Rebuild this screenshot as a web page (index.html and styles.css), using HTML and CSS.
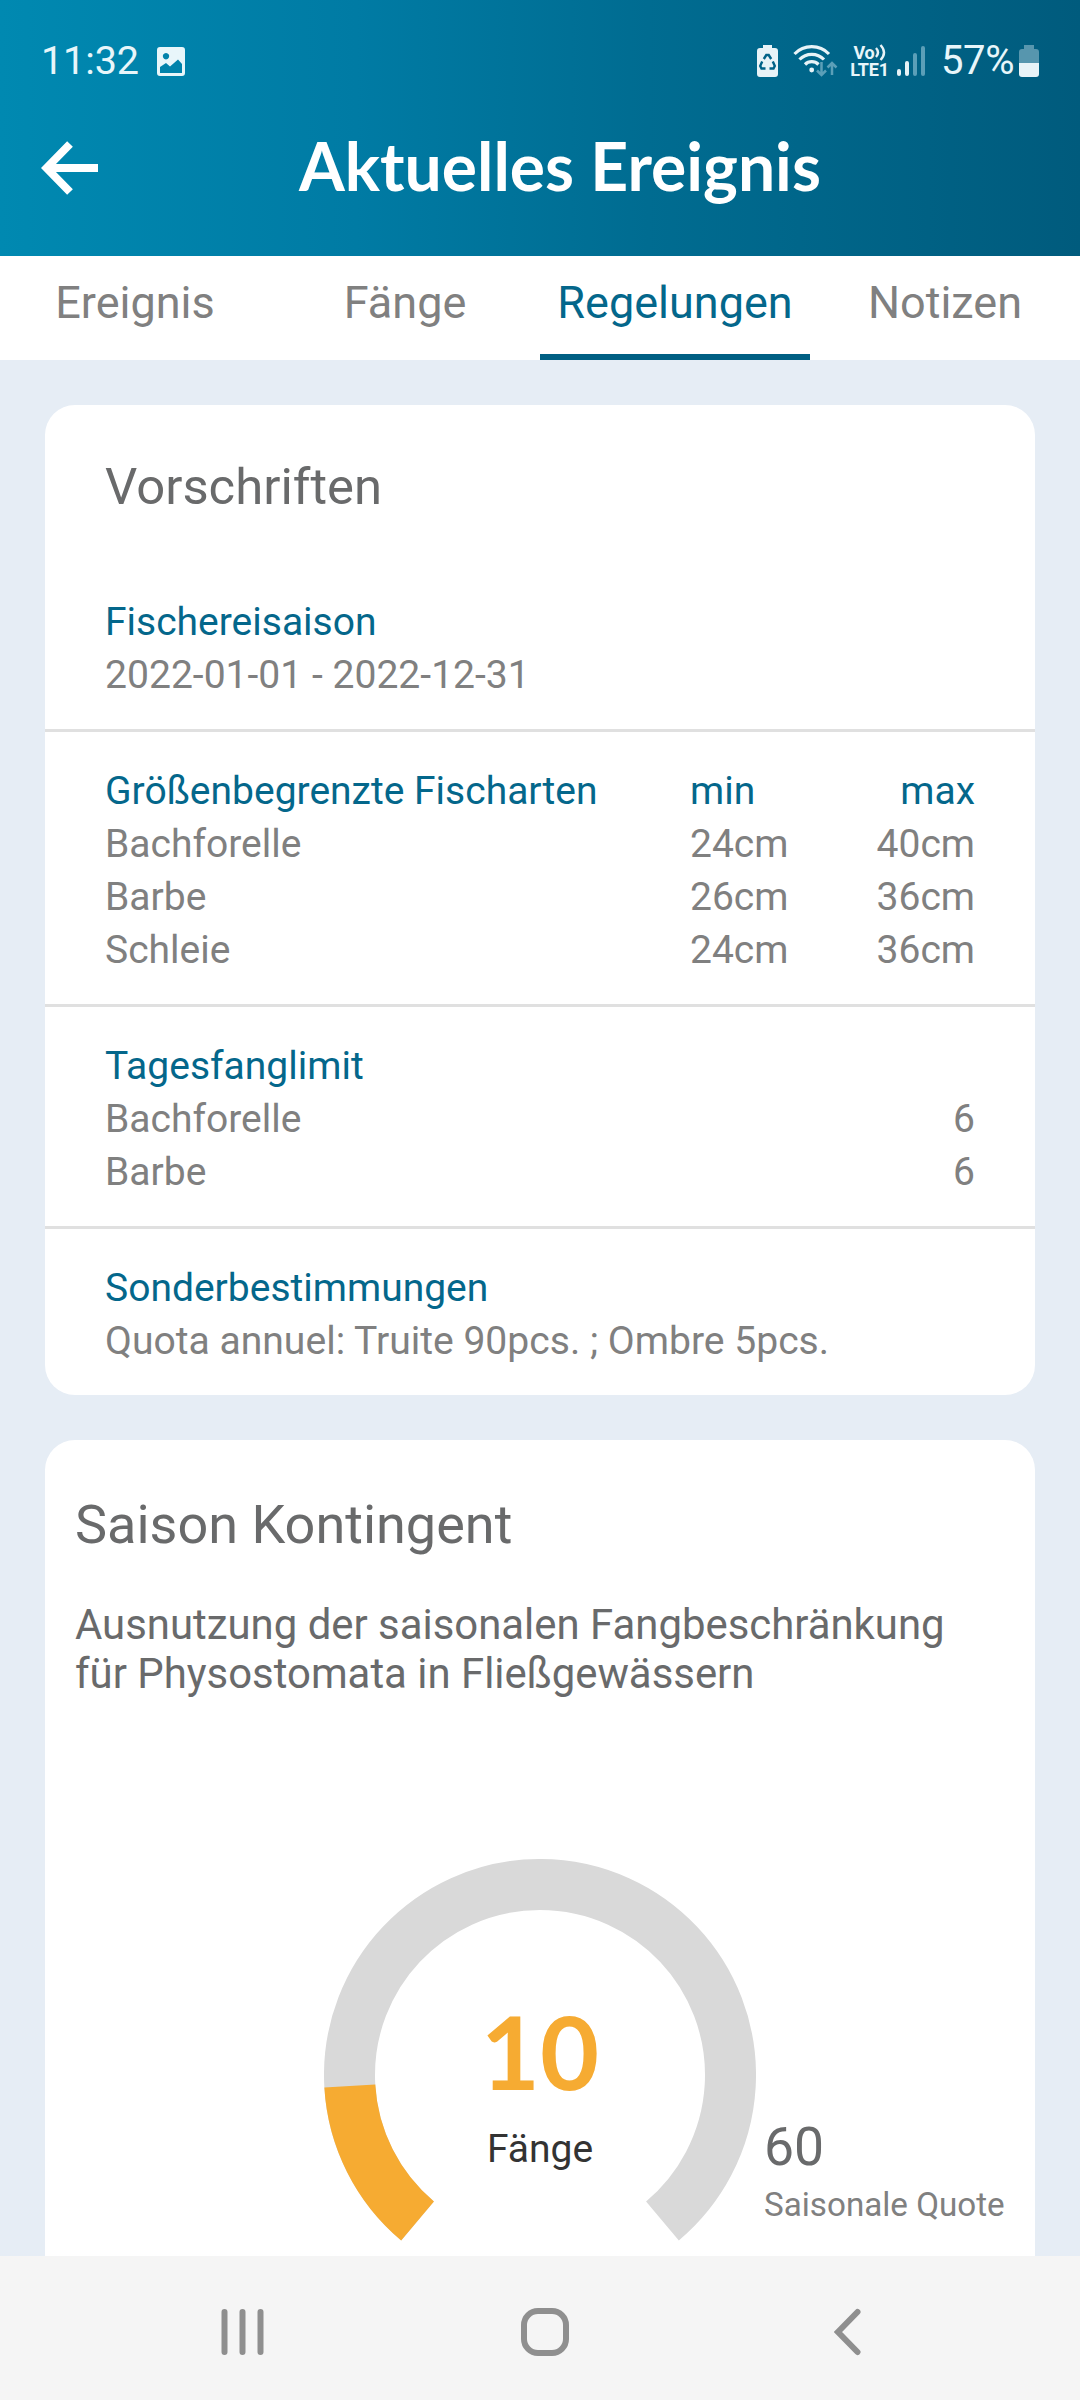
FILE: index.html
```html
<!DOCTYPE html>
<html lang="de">
<head>
    <meta charset="UTF-8">
    <meta name="viewport" content="width=device-width, initial-scale=1.0">
    <title>Aktuelles Ereignis</title>
    <link rel="stylesheet" href="styles.css">
</head>
<body>
    <header>
        <div class="status-bar">
            <span class="clock">11:32</span>
            <svg class="icon-image" width="28" height="29" viewBox="0 0 28 29">
                <path fill="#e8f6fa" fill-rule="evenodd" d="M3 0h22a3 3 0 0 1 3 3v23a3 3 0 0 1-3 3H3a3 3 0 0 1-3-3V3a3 3 0 0 1 3-3zM9 6a3.200 3.200 0 1 0 .01 0zM3 20v6h22v-9l-4-4.500-8 7-4-3.500z"/>
            </svg>

            <div class="status-icons">
                <svg class="icon-saver" width="21" height="32" viewBox="0 0 21 32">
                    <path fill="#e8f3f7" d="M6 0h9v3h3a3 3 0 0 1 3 3v23a3 3 0 0 1-3 3H3a3 3 0 0 1-3-3V6a3 3 0 0 1 3-3h3z"/>
                    <path fill="none" stroke="#006287" stroke-width="2.400" d="M6.800 14L9.300 10h2.400l2.500 4M15.800 16.500l2 4.500-1.300 2.500H12.500M8.500 23.500H4.500L3.200 21l2-4.500"/>
                </svg>
                <svg class="icon-wifi" width="45" height="34" viewBox="0 0 45 34">
                    <g fill="none" stroke="#e8f3f7" stroke-width="3.200">
                        <path d="M1.500 10a24 24 0 0 1 34.500 0"/>
                        <path d="M6.500 15.500a17 17 0 0 1 24.500 0"/>
                        <path d="M12 20.500a9.500 9.500 0 0 1 13.500 0"/>
                    </g>
                    <circle cx="18.700" cy="26" r="2.400" fill="#e8f3f7"/>
                    <path fill="none" stroke="#5b9fb8" stroke-width="2.500" d="M28.500 18v13M24 26.500l4.500 4.500 4.500-4.500M39 31V19M34.500 23.500L39 19l4.500 4.500"/>
                </svg>
                <div class="volte">
                    <div class="volte-top">
                        <span>Vo</span>
                        <svg width="11" height="17" viewBox="0 0 11 17">
                            <path fill="none" stroke="#e8f3f7" stroke-width="2.400" d="M1 4q4 4.500 0 9M5.500 1q7 7.500 0 15"/>
                        </svg>
                    </div>
                    <span>LTE1</span>
                </div>
                <svg class="icon-signal" width="28" height="30" viewBox="0 0 28 30">
                    <g stroke-width="4" stroke-linecap="round">
                        <path stroke="#e8f3f7" d="M2 25v3M10 17v11"/>
                        <path stroke="#5b9fb8" d="M18 9v19M26 2v26"/>
                    </g>
                </svg>
                <span class="percent">57%</span>
                <svg class="icon-battery" width="20" height="32" viewBox="0 0 20 32">
                    <path fill="#5796ae" d="M5 0h10v4h2a3 3 0 0 1 3 3v11H0V7a3 3 0 0 1 3-3h2z"/>
                    <path fill="#e8f3f7" d="M0 18h20v11a3 3 0 0 1-3 3H3a3 3 0 0 1-3-3z"/>
                </svg>
            </div>
        </div>

        <div class="title-bar">
            <svg class="back" width="58" height="54" viewBox="0 0 58 54">
                <path fill="none" stroke="#fff" stroke-width="8" d="M29 3L5.500 27 29 51M7 27h50"/>
            </svg>
            <h1>Aktuelles Ereignis</h1>
        </div>
    </header>

    <nav class="tabs">
        <a>Ereignis</a>
        <a>Fänge</a>
        <a class="active">Regelungen</a>
        <a>Notizen</a>
    </nav>

    <main>
        <div class="card">
            <h2 class="rules-title">Vorschriften</h2>
            <section class="season">
                <h3>Fischereisaison</h3>
                <p>2022-01-01 - 2022-12-31</p>
            </section>
            <section>
                <div class="row sizes"><h3>Größenbegrenzte Fischarten</h3><h3>min</h3><h3>max</h3></div>
                <div class="row sizes"><span>Bachforelle</span><span>24cm</span><span>40cm</span></div>
                <div class="row sizes"><span>Barbe</span><span>26cm</span><span>36cm</span></div>
                <div class="row sizes"><span>Schleie</span><span>24cm</span><span>36cm</span></div>
            </section>
            <section>
                <h3>Tagesfanglimit</h3>
                <div class="row"><span>Bachforelle</span><span>6</span></div>
                <div class="row"><span>Barbe</span><span>6</span></div>
            </section>
            <section>
                <h3>Sonderbestimmungen</h3>
                <p>Quota annuel: Truite 90pcs. ; Ombre 5pcs.</p>
            </section>
        </div>

        <div class="card quota">
            <h2>Saison Kontingent</h2>
            <p class="description">Ausnutzung der saisonalen Fangbeschränkung für Physostomata in Fließgewässern</p>
            <div class="chart">
                <div class="gauge">
                    <svg width="432" height="432" viewBox="0 0 432 432">
                        <g fill="none" stroke-width="51">
                            <path stroke="#d9d9d9" d="M93.550 361.930A190.500 190.500 0 1 1 338.450 361.930"/>
                            <path stroke="#f6ab32" d="M93.550 361.930A190.500 190.500 0 0 1 25.820 227.070"/>
                        </g>
                    </svg>
                    <div class="gauge-label">
                        <strong>10</strong>
                        <span>Fänge</span>
                    </div>
                </div>
                <div class="limit">
                    <span class="limit-value">60</span>
                    <span class="limit-label">Saisonale Quote</span>
                </div>
            </div>
        </div>
    </main>

    <footer>
        <svg width="43" height="48" viewBox="0 0 43 48">
            <path stroke="#8f8f8f" stroke-width="6" stroke-linecap="round" d="M3.500 4v40M21.500 4v40M39.500 4v40"/>
        </svg>
        <svg class="home" width="48" height="48" viewBox="0 0 48 48">
            <rect x="3" y="3" width="42" height="42" rx="14" fill="none" stroke="#8f8f8f" stroke-width="6"/>
        </svg>
        <svg width="27" height="48" viewBox="0 0 27 48">
            <path fill="none" stroke="#8f8f8f" stroke-width="6" stroke-linecap="round" d="M23.500 4L4 24l19.500 20"/>
        </svg>
    </footer>
</body>
</html>
```
FILE: styles.css
```css
* {
    box-sizing: border-box;
}
body {
    margin: 0;
    width: 1080px;
    height: 2400px;
    overflow: hidden;
    display: flex;
    flex-direction: column;
    background-color: #e6edf5;
    font-family: Roboto, sans-serif;
    font-size: 39px;
    line-height: 53px;
    color: #808080;
}
h1, h2, h3, p {
    margin: 0;
    font-weight: normal;
}
svg {
    display: block;
    flex-shrink: 0;
}
header {
    height: 256px;
    flex-shrink: 0;
    background: linear-gradient(90deg, #0089b1 0%, #007ba4 33%, #006c91 60%, #005b7d 100%);
    color: white;
}
.status-bar {
    display: flex;
    align-items: flex-start;
    height: 120px;
    padding: 34px 41px 0 41px;
    font-size: 39.500px;
    color: #e8f6fa;
}
.clock {
    width: 98px;
    letter-spacing: -0.1px;
}
.icon-image {
    margin: 13px 0 0 18px;
}
.status-icons {
    display: flex;
    align-items: flex-start;
    margin-left: auto;
}
.icon-saver {
    margin: 11px 15px 0 0;
}
.icon-wifi {
    margin: 10px 13px 0 0;
}
.volte {
    display: flex;
    flex-direction: column;
    width: 37px;
    margin: 10px 9px 0 0;
    font-size: 18px;
    font-weight: bold;
    line-height: 17px;
    letter-spacing: -0.2px;
    align-items: center;
}
.volte-top {
    display: flex;
}
.icon-signal {
    margin: 12px 16px 0 0;
}
.percent {
    width: 71px;
    margin-right: 7px;
    font-size: 40px;
    letter-spacing: -0.4px;
}
.icon-battery {
    margin-top: 11px;
}
.title-bar {
    display: flex;
    align-items: center;
    height: 96px;
    padding-left: 41px;
}
h1 {
    margin: -4px 0 0 200px;
    font-family: Lato, sans-serif;
    font-size: 66px;
    font-weight: bold;
    line-height: 92px;
    white-space: nowrap;
}
.tabs {
    display: flex;
    height: 104px;
    flex-shrink: 0;
    background-color: white;
}
.tabs a {
    width: 270px;
    padding-top: 20px;
    font-size: 45px;
    text-align: center;
}
.tabs .active {
    color: #04678b;
    border-bottom: 6px solid #005f83;
}
main {
    flex: 1;
    min-height: 0;
    overflow: hidden;
    padding: 45px 45px 0;
}
.card {
    background-color: white;
    border-radius: 30px;
    margin-bottom: 45px;
}
h2 {
    color: #696a6b;
    font-size: 50.800px;
}
h3 {
    color: #04678b;
    font-size: 39px;
}
p {
    font-size: 39.100px;
}
.rules-title {
    padding: 55px 60px 0;
}
section {
    padding: 33px 60px 27px;
    border-top: 3px solid #e0e0e0;
}
.season {
    padding-top: 83px;
    border-top: none;
}
.row {
    display: flex;
    justify-content: space-between;
}
.sizes {
    display: grid;
    grid-template-columns: 585px 1fr 1fr;
}
.sizes > :last-child {
    text-align: right;
}
.quota {
    height: 900px;
    padding: 58px 30px 0;
}
.quota h2 {
    font-size: 54px;
}
.description {
    width: 900px;
    margin-top: 49px;
    color: #696a6b;
    font-size: 41.900px;
    line-height: 49px;
}
.chart {
    display: grid;
    grid-template-columns: 249px 432px 1fr;
    margin-top: 161px;
}
.gauge {
    grid-column: 2;
    position: relative;
}
/* value sits in the middle of the ring */
.gauge-label {
    position: absolute;
    inset: 127px 0 0;
    display: flex;
    flex-direction: column;
    align-items: center;
}
.gauge-label strong {
    font-family: Lato, sans-serif;
    font-size: 102px;
    line-height: 130px;
    color: #f6ab32;
}
.gauge-label span {
    margin-top: 7px;
    color: #333;
}
.limit {
    display: flex;
    flex-direction: column;
    padding: 258px 0 0 8px;
    white-space: nowrap;
}
.limit-value {
    font-size: 53.500px;
    line-height: 60px;
    color: #696a6b;
}
.limit-label {
    margin-top: 6px;
    font-size: 33.200px;
    line-height: 44px;
}
footer {
    display: flex;
    justify-content: space-between;
    height: 144px;
    flex-shrink: 0;
    padding: 52px 219px 0 221px;
    background-color: #f5f5f5;
}
.home {
    margin-right: 8px;
}
```
